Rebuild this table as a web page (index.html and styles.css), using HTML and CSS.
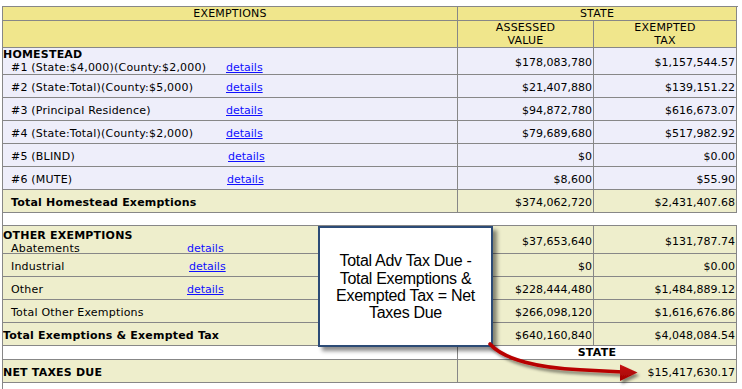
FILE: index.html
```html
<!DOCTYPE html>
<html>
<head>
<meta charset="utf-8">
<title>Exemptions</title>
<link rel="stylesheet" href="styles.css">
</head>
<body>
<div class="page">
  <div class="sheet">
    <div class="c hd">EXEMPTIONS</div>
    <div class="c hd span2">STATE</div>
    <div class="c hd"></div>
    <div class="c hd">ASSESSED<br>VALUE</div>
    <div class="c hd">EXEMPTED<br>TAX</div>

    <div class="c lv stack"><b class="grp">HOMESTEAD</b><span class="item"><span class="nm nm-h">#1 (State:$4,000)(County:$2,000)</span><a href="#">details</a></span></div>
    <div class="c lv num">$178,083,780</div>
    <div class="c lv num">$1,157,544.57</div>

    <div class="c lv lbl"><span class="item"><span class="nm nm-h">#2 (State:Total)(County:$5,000)</span><a href="#">details</a></span></div>
    <div class="c lv num">$21,407,880</div>
    <div class="c lv num">$139,151.22</div>

    <div class="c lv lbl"><span class="item"><span class="nm nm-h">#3 (Principal Residence)</span><a href="#">details</a></span></div>
    <div class="c lv num">$94,872,780</div>
    <div class="c lv num">$616,673.07</div>

    <div class="c lv lbl"><span class="item"><span class="nm nm-h">#4 (State:Total)(County:$2,000)</span><a href="#">details</a></span></div>
    <div class="c lv num">$79,689,680</div>
    <div class="c lv num">$517,982.92</div>

    <div class="c lv lbl"><span class="item"><span class="nm nm-h2">#5 (BLIND)</span><a href="#">details</a></span></div>
    <div class="c lv num">$0</div>
    <div class="c lv num">$0.00</div>

    <div class="c lv lbl"><span class="item"><span class="nm nm-h1">#6 (MUTE)</span><a href="#">details</a></span></div>
    <div class="c lv num">$8,600</div>
    <div class="c lv num">$55.90</div>

    <div class="c bg lbl"><b class="item nm">Total Homestead Exemptions</b></div>
    <div class="c bg num">$374,062,720</div>
    <div class="c bg num">$2,431,407.68</div>

    <div class="c gap"></div>

    <div class="c bg stack stack-o"><b class="grp">OTHER EXEMPTIONS</b><span class="item"><span class="nm nm-o">Abatements</span><a href="#">details</a></span></div>
    <div class="c bg num">$37,653,640</div>
    <div class="c bg num">$131,787.74</div>

    <div class="c bg lbl"><span class="item"><span class="nm nm-o2">Industrial</span><a href="#">details</a></span></div>
    <div class="c bg num">$0</div>
    <div class="c bg num">$0.00</div>

    <div class="c bg lbl"><span class="item"><span class="nm nm-o">Other</span><a href="#">details</a></span></div>
    <div class="c bg num">$228,444,480</div>
    <div class="c bg num">$1,484,889.12</div>

    <div class="c bg lbl"><span class="item nm">Total Other Exemptions</span></div>
    <div class="c bg num">$266,098,120</div>
    <div class="c bg num">$1,616,676.86</div>

    <div class="c bg lbl"><b class="nm">Total Exemptions &amp; Exempted Tax</b></div>
    <div class="c bg num">$640,160,840</div>
    <div class="c bg num">$4,048,084.54</div>

    <div class="c wh"></div>
    <div class="c wh span2 sub"><b>STATE</b></div>

    <div class="c bg lbl"><b class="nm">NET TAXES DUE</b></div>
    <div class="c bg num span2">$15,417,630.17</div>

    <div class="tail"></div>
  </div>

  <div class="callout">
    <div class="callout-text">
      <span>Total Adv Tax Due -</span>
      <span>Total Exemptions &amp;</span>
      <span>Exempted Tax = Net</span>
      <span>Taxes Due</span>
    </div>
  </div>

  <svg class="arrow" width="742" height="389" viewBox="0 0 742 389" xmlns="http://www.w3.org/2000/svg">
    <defs>
      <filter id="sh" x="-20%" y="-50%" width="140%" height="200%">
        <feDropShadow dx="2" dy="3" stdDeviation="1.6" flood-color="#000" flood-opacity="0.45"/>
      </filter>
      <linearGradient id="rg" x1="0" y1="0" x2="0" y2="1">
        <stop offset="0" stop-color="#c81414"/>
        <stop offset="1" stop-color="#a00000"/>
      </linearGradient>
    </defs>
    <g filter="url(#sh)">
      <path d="M490,344 C504,360 540,368 580,369.8 L623,372" fill="none" stroke="#b80606" stroke-width="3.6" stroke-linecap="round"/>
      <polygon points="620,364.5 637.5,372.5 620,381" fill="url(#rg)"/>
    </g>
  </svg>
</div>
</body>
</html>
```

FILE: styles.css
```css
html, body {
  margin: 0;
  padding: 0;
  background: #ffffff;
}

.page {
  position: relative;
  width: 742px;
  height: 389px;
  overflow: hidden;
  padding: 6px 0 0 2px;
  box-sizing: border-box;
  font-family: "DejaVu Sans", Verdana, sans-serif;
  font-size: 11px;
  color: #000000;
}

.sheet {
  display: grid;
  width: 735px;
  grid-template-columns: 455px 136px 143px;
  grid-template-rows: 14px 27px 27px 23px 23px 23px 23px 23px 23px 13px 28px 23px 23px 23px 23px 14px 23px 30px;
  border-left: 1px solid #878787;
  border-top: 1px solid #878787;
}

.c {
  box-sizing: border-box;
  border-right: 1px solid #878787;
  border-bottom: 1px solid #878787;
  display: flex;
  align-items: center;
  line-height: 13px;
  white-space: nowrap;
  overflow: hidden;
}

.hd {
  background: #f0e68c;
  justify-content: center;
  text-align: center;
  letter-spacing: 0.2px;
}

.lv { background: #eeeefa; }
.bg { background: #eeeecc; }
.wh { background: #ffffff; }

.span2 { grid-column: span 2; }

.gap {
  grid-column: span 3;
  background: #ffffff;
  border-right: none;
}

.tail {
  grid-column: span 3;
}

.num {
  justify-content: flex-end;
  padding: 3px 1px 0 0;
}

.lbl {
  padding-top: 3px;
}

.stack {
  flex-direction: column;
  align-items: flex-start;
  justify-content: flex-start;
  padding-top: 0;
}

.stack-o {
  padding-top: 3px;
}

.grp {
  display: block;
  letter-spacing: 0.2px;
}

.item {
  display: block;
  padding-left: 8px;
}

.nm {
  letter-spacing: 0.2px;
}

.nm-h, .nm-h1, .nm-h2, .nm-o, .nm-o2 {
  display: inline-block;
}

.nm-h { width: 215px; }
.nm-h1 { width: 216px; }
.nm-h2 { width: 217px; }
.nm-o { width: 176px; }
.nm-o2 { width: 178px; }

a {
  color: #1010ff;
  text-decoration: underline;
}

.sub {
  justify-content: center;
  letter-spacing: 0.3px;
}

.callout {
  position: absolute;
  left: 318px;
  top: 226px;
  width: 175px;
  height: 121px;
  box-sizing: border-box;
  background: #ffffff;
  border: 2px solid #2c4b76;
  box-shadow: 4px 4px 4px rgba(0, 0, 0, 0.45);
  display: flex;
  align-items: center;
  justify-content: center;
}

.callout-text {
  display: flex;
  flex-direction: column;
  align-items: center;
  font-family: "Liberation Sans", Arial, sans-serif;
  font-size: 16px;
  line-height: 17.4px;
  letter-spacing: -0.3px;
  color: #000000;
  white-space: nowrap;
  padding-top: 1px;
}

.arrow {
  position: absolute;
  left: 0;
  top: 0;
  pointer-events: none;
}
```
